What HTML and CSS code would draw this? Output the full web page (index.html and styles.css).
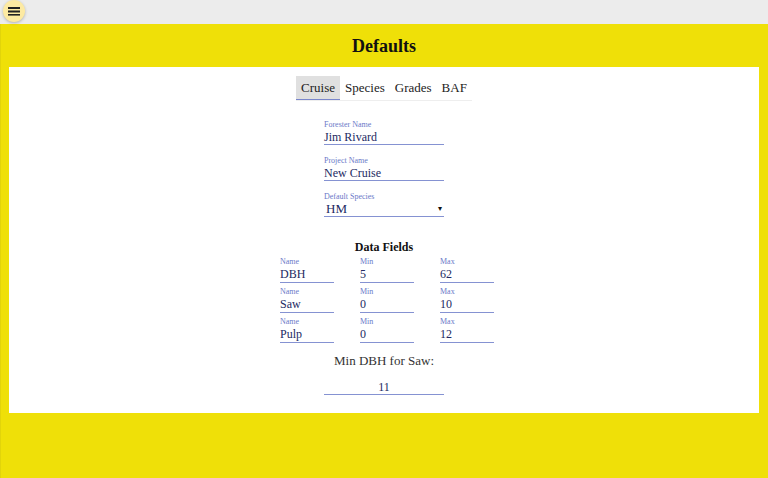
FILE: index.html
```html
<!DOCTYPE html>
<html>
<head>
<meta charset="utf-8">
<link rel="stylesheet" href="styles.css">
</head>
<body>
<div class="topbar">
  <div class="fab">
    <svg width="12" height="10" viewBox="0 0 12 10"><rect x="0" y="1" width="12" height="2" fill="#222"/><rect x="0" y="4.5" width="12" height="2" fill="#222"/><rect x="0" y="8" width="12" height="1.6" fill="#222"/></svg>
  </div>
</div>
<div class="page">
  <h1 class="title">Defaults</h1>
  <div class="panel">
    <div class="tabs">
      <div class="tab active">Cruise</div>
      <div class="tab">Species</div>
      <div class="tab">Grades</div>
      <div class="tab">BAF</div>
    </div>
    <div class="form">
      <div class="field">
        <div class="label">Forester Name</div>
        <div class="value">Jim Rivard</div>
      </div>
      <div class="field">
        <div class="label">Project Name</div>
        <div class="value">New Cruise</div>
      </div>
      <div class="field">
        <div class="label">Default Species</div>
        <div class="value select"><span>HM</span><span class="arrow">▾</span></div>
      </div>
    </div>
    <div class="section-title">Data Fields</div>
    <div class="grid">
      <div class="cell"><div class="label">Name</div><div class="value">DBH</div></div>
      <div class="cell"><div class="label">Min</div><div class="value">5</div></div>
      <div class="cell"><div class="label">Max</div><div class="value">62</div></div>
      <div class="cell"><div class="label">Name</div><div class="value">Saw</div></div>
      <div class="cell"><div class="label">Min</div><div class="value">0</div></div>
      <div class="cell"><div class="label">Max</div><div class="value">10</div></div>
      <div class="cell"><div class="label">Name</div><div class="value">Pulp</div></div>
      <div class="cell"><div class="label">Min</div><div class="value">0</div></div>
      <div class="cell"><div class="label">Max</div><div class="value">12</div></div>
    </div>
    <div class="mindbh">Min DBH for Saw:</div>
    <div class="value center">11</div>
  </div>
</div>
</body>
</html>
```
FILE: styles.css
```css
html, body {
  margin: 0;
  padding: 0;
  height: 100%;
}
body {
  font-family: "Liberation Serif", "Times New Roman", serif;
  background: #efe008;
  display: flex;
  flex-direction: column;
}
.topbar {
  height: 24px;
  background: #ececec;
  flex: none;
  display: flex;
  align-items: flex-start;
  padding-left: 3px;
}
.fab {
  width: 22px;
  height: 22px;
  border-radius: 50%;
  background: #fdeaa2;
  box-shadow: 0 1px 3px rgba(0,0,0,0.25);
  display: flex;
  align-items: center;
  justify-content: center;
}
.page {
  flex: 1;
  border-left: 1px solid #e2d40a;
  padding: 0 9px 0 8px;
}
.title {
  margin: 0;
  height: 43px;
  line-height: 44px;
  text-align: center;
  font-size: 18px;
  font-weight: bold;
  color: #111;
}
.panel {
  background: #fff;
  padding: 9px 0 18px;
  display: flex;
  flex-direction: column;
  align-items: center;
}
.tabs {
  display: flex;
  border-bottom: 1px solid #eee;
}
.tab {
  height: 23px;
  line-height: 23px;
  padding: 0 5px;
  font-size: 13px;
  color: #222;
  border-bottom: 1px solid transparent;
}
.tab.active {
  background: #e0e0e0;
  border-bottom-color: #7986cb;
}
.form {
  margin-top: 19px;
  width: 120px;
  display: flex;
  flex-direction: column;
  gap: 11px;
}
.label {
  font-size: 8px;
  line-height: 10px;
  color: #6a79c8;
}
.value {
  font-size: 12px;
  line-height: 14px;
  color: #232a62;
  border-bottom: 1px solid #8592d2;
  white-space: nowrap;
}
.select {
  display: flex;
  justify-content: space-between;
  padding-left: 2px;
  font-size: 13px;
}
.arrow {
  font-size: 8px;
  color: #111;
  padding-right: 2px;
}
.section-title {
  margin-top: 23px;
  font-size: 12px;
  line-height: 14px;
  font-weight: bold;
  color: #111;
}
.grid {
  margin-top: 3px;
  padding-left: 6px;
  display: grid;
  grid-template-columns: 80px 80px 54px;
  row-gap: 4px;
}
.cell {
  width: 54px;
}
.cell .value {
  line-height: 15px;
}
.mindbh {
  margin-top: 10px;
  font-size: 13px;
  line-height: 16px;
  color: #333;
}
.value.center {
  margin-top: 11px;
  width: 120px;
  text-align: center;
}
```
